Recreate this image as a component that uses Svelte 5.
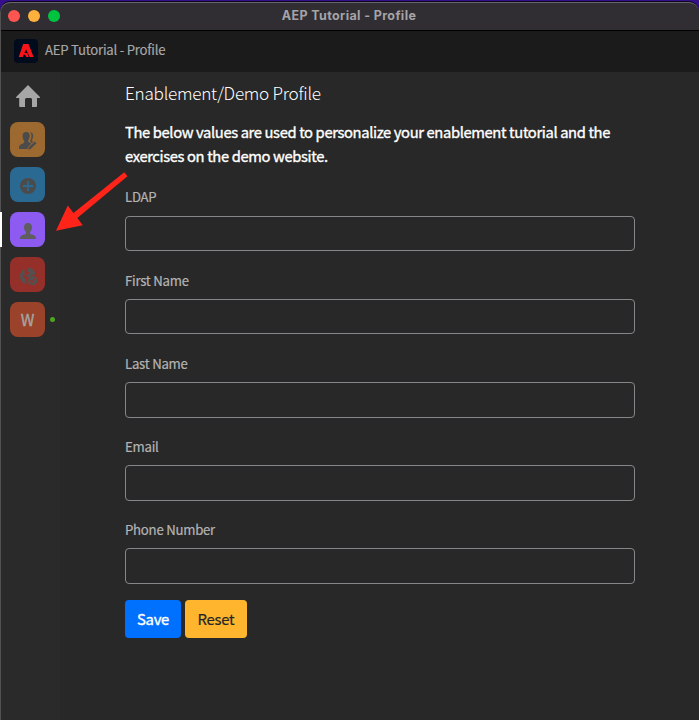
<script>
  const fields = [
    { id: 'ldap', label: 'LDAP' },
    { id: 'first', label: 'First Name' },
    { id: 'last', label: 'Last Name' },
    { id: 'email', label: 'Email' },
    { id: 'phone', label: 'Phone Number' }
  ];
</script>

<div class="window">
  <header class="titlebar">
    <div class="lights"><i class="close"></i><i class="min"></i><i class="max"></i></div>
    <span class="wintitle">AEP Tutorial - Profile</span>
  </header>
  <div class="appbar">
    <svg class="logo" width="24" height="24" viewBox="0 0 24 24">
      <rect width="24" height="24" rx="4" fill="#000b1d" />
      <path d="M9.200 5h5.300L19.600 18.100h-4L12.100 10.400 10.500 14.100h2.700l1.600 4h-2.600l-1-2.300H9.700L8.700 18.100H4.700z" fill="#f91419" />
    </svg>
    <span class="apptitle">AEP Tutorial - Profile</span>
  </div>
  <div class="body">
    <nav>
      <svg class="home" width="26" height="23" viewBox="0 0 26 23"><path d="M13 0 25 12q.4 1-.7 1H22v8.200q0 .8-.8.8H17v-7.500q0-1.500-1.200-1.500h-4.400q-1.400 0-1.400 1.500V22H5q-.8 0-.8-.8V13H1.700q-1.100 0-.6-1z" fill="#a6a6a6" /></svg>
      <div class="item"><div class="tile brown">
        <svg width="35" height="35" viewBox="0 0 35 35" fill="#4b4b4b">
          <path d="M16.200 10c3 0 4 2.200 3.400 5.300-.3 1.600-1.100 2.500-1.400 3.200-.2 1.500.5 1.700 3.300 2.900L18 25l-.5 2H9v-1.800c0-2.300 3.500-3.300 4.800-4.100.6-.4.6-1.700.1-2.500-1.100-1.300-1.300-3.100-1.300-4.800 0-2.200 1.300-3.800 3.600-3.800z" />
          <path d="M20 10.200c2.800.2 3.700 2.600 2.900 5.500-.4 1.400-1 2.200-1.100 3l1.300.9-1.100 1.300-1.900-1.200c.1-1.400 1.100-2.600 1.300-5 .2-1.900-.2-3.400-1.400-4.500z" />
          <path d="M24.700 19.200l2.100 2-6.200 6-2.900.8.900-3z" stroke="#9c6a30" stroke-width=".5" />
        </svg>
      </div></div>
      <div class="item"><div class="tile blue">
        <svg width="35" height="35" viewBox="0 0 35 35"><circle cx="18" cy="19" r="8" fill="#4b4b4b" /><path d="M18 14v10M13 19h10" stroke="#2a6992" stroke-width="1.800" /></svg>
      </div></div>
      <div class="item active"><div class="tile violet">
        <svg width="35" height="35" viewBox="0 0 35 35"><path d="M18 11c2.700 0 4 1.700 4 4.200 0 2-.6 3.200-1.600 4.400-.7 1-.4 2.200.5 2.600 2.800.7 5 1.500 5 3.500V27H10v-1.300c0-2 2.300-2.800 5.100-3.500.9-.4 1.200-1.600.5-2.600-1-1.200-1.600-2.400-1.600-4.400C14 12.700 15.300 11 18 11z" fill="#5e5e61" /></svg>
      </div></div>
      <div class="item"><div class="tile red">
        <svg width="35" height="35" viewBox="0 0 35 35" fill="#54504f">
          <path d="M14.200 12.200c-3.500 2-5.100 5.800-4 9.600.9 2.800 2.700 4.500 5.800 5.200l1-1.300-1.800-1.700.6-2.100-3-2.200.3-1.600 2.400-.9-1.400-2.100.9-1.500z" />
          <path d="M16.700 11.100c4.200-.5 7.400 1.300 8.500 4.800l.4 2.100-2.800-.4-2 1.200-.5 2-2.500-.9-1.700-.4-.9-1.400 3-.7 1.600-2.200-2.700-.9 1-1.600z" />
          <circle cx="22.700" cy="23.500" r="4.700" />
          <path d="M20.300 23.500l1.800 1.900 3-3.700" stroke="#952f29" stroke-width="1.200" fill="none" />
        </svg>
      </div></div>
      <div class="item online"><div class="tile orange">W</div></div>
    </nav>
    <main>
      <h1>Enablement/Demo Profile</h1>
      <p>The below values are used to personalize your enablement tutorial and the<br />exercises on the demo website.</p>
      {#each fields as f}
        <div class="field"><label for={f.id}>{f.label}</label><input id={f.id} /></div>
      {/each}
      <div class="actions"><button class="save">Save</button><button class="reset">Reset</button></div>
    </main>
  </div>
  <svg class="arrow" width="74" height="62" viewBox="0 0 74 62" fill="#ff2419"><path d="M68.300 1.300l3.200 4L21.300 47l5.500 7.200L0 59.800 11.800 34.500l5.700 7.400z" /></svg>
</div>

<style>
  :global(body) { margin: 0; background: #36108c; }
  .window { position: relative; box-sizing: border-box; height: 718px; margin-top: 2px; padding-left: 1px; background: #515151; border-top: 1px solid #69676d; border-radius: 10px 10px 0 0; overflow: hidden; font-family: "Noto Sans CJK JP", "Noto Sans", sans-serif; box-shadow: 0 -1px 0 #0b061c; }
  .titlebar { height: 27px; background: #302e33; border-bottom: 1px solid #000; border-radius: 9px 9px 0 0; display: flex; align-items: center; justify-content: center; position: relative; }
  .lights { position: absolute; left: 7px; top: 7px; display: flex; gap: 8px; }
  .lights i { width: 12px; height: 12px; border-radius: 50%; }
  .close { background: #ff5550; }
  .min { background: #ffb13d; }
  .max { background: #00c440; }
  .wintitle { font: 700 12.500px/27px Inter, sans-serif; color: #a5a3a7; position: relative; left: -1px; top: -1px; letter-spacing: 0.380px; }
  .appbar { height: 41px; background: #1b1b1b; display: flex; align-items: center; padding-left: 13px; gap: 7px; }
  .logo { margin-top: -1px; flex: none; }
  .apptitle { font-size: 13.200px; line-height: 20px; letter-spacing: -0.250px; color: #a8a8a8; margin-top: -3px; white-space: nowrap; -webkit-text-stroke: 0.150px #a8a8a8; }
  .body { display: flex; height: 648px; background: #282828; }
  nav { width: 59px; background: #2a2a2a; flex: none; }
  .home { display: block; margin: 13px 0 0 13.500px; }
  .item { height: 35px; margin-bottom: 10px; padding-left: 9px; position: relative; }
  .home + .item { margin-top: 14px; }
  .tile { width: 35px; height: 35px; border-radius: 8px; color: #a6a6a6; font-size: 15.500px; line-height: 34px; text-align: center; -webkit-text-stroke: 0.300px #a6a6a6; }
  .tile svg { display: block; }
  .brown { background: #9c6a30; }
  .blue { background: #2a6992; }
  .violet { background: #8e5bf2; }
  .red { background: #952f29; }
  .orange { background: #9a432a; }
  .active::before { content: ""; position: absolute; left: -1px; top: 0; width: 2px; height: 35px; background: #fff; }
  .online::after { content: ""; position: absolute; left: 49px; top: 15px; width: 5px; height: 5px; border-radius: 50%; background: #4da51f; }
  main { margin-left: 65px; width: 510px; padding-top: 9px; }
  h1 { margin: 0; font-size: 17.200px; line-height: 24px; font-weight: 300; letter-spacing: -0.280px; color: #fff; white-space: nowrap; }
  p { margin: 15px 0 20px; font-size: 14.750px; line-height: 24px; font-weight: 400; letter-spacing: -0.370px; -webkit-text-stroke: 0.350px #fff; color: #fff; white-space: nowrap; }
  .field { height: 83.100px; }
  label { display: block; height: 28px; line-height: 20px; font-size: 13.200px; letter-spacing: -0.250px; color: #b4b4b4; -webkit-text-stroke: 0.200px #b4b4b4; position: relative; top: -0.600px; }
  input { display: block; box-sizing: border-box; width: 510px; height: 35.350px; padding: 0 12px; background: transparent; border: 1px solid #85868a; border-radius: 4px; color: #fff; outline: none; }
  .actions { display: flex; gap: 4px; margin-top: -3.500px; }
  button { height: 38px; border: 0; border-radius: 4px; padding: 0; font-family: inherit; font-size: 14.900px; line-height: 38px; letter-spacing: -0.250px; font-weight: 400; }
  .save { width: 56px; background: #0070ff; color: #fff; -webkit-text-stroke: 0.350px #fff; }
  .reset { width: 62px; background: #ffb62e; color: #252525; -webkit-text-stroke: 0.200px #252525; }
  .arrow { position: absolute; left: 56px; top: 168px; }
</style>
